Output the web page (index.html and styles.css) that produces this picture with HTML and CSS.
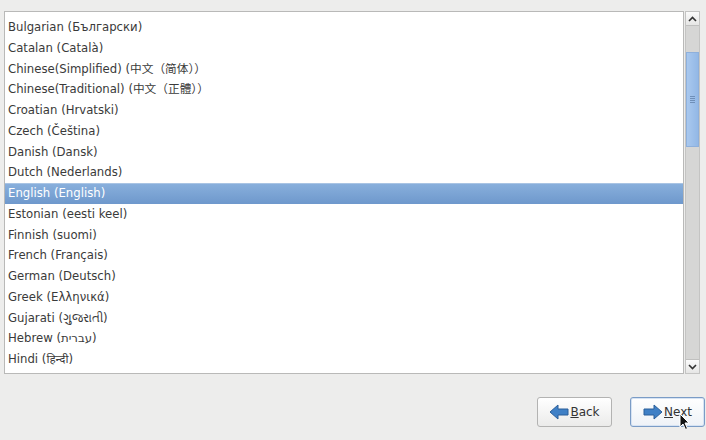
FILE: index.html
```html
<!DOCTYPE html>
<html>
<head>
<meta charset="utf-8">
<link rel="stylesheet" href="styles.css">
</head>
<body>
<div class="page">
  <div class="listwrap">
    <div class="list">
      <div class="row">Bulgarian (Български)</div>
      <div class="row">Catalan (Català)</div>
      <div class="row">Chinese(Simplified) (中文（简体））</div>
      <div class="row">Chinese(Traditional) (中文（正體））</div>
      <div class="row">Croatian (Hrvatski)</div>
      <div class="row">Czech (Čeština)</div>
      <div class="row">Danish (Dansk)</div>
      <div class="row">Dutch (Nederlands)</div>
      <div class="row sel">English (English)</div>
      <div class="row">Estonian (eesti keel)</div>
      <div class="row">Finnish (suomi)</div>
      <div class="row">French (Français)</div>
      <div class="row">German (Deutsch)</div>
      <div class="row">Greek (Ελληνικά)</div>
      <div class="row">Gujarati (ગુજરાતી)</div>
      <div class="row">Hebrew (עברית)</div>
      <div class="row">Hindi (हिन्दी)</div>
    </div>
    <div class="scrollbar">
      <div class="sbtn up"><svg width="9" height="6" viewBox="0 0 9 6"><path d="M1 5 L4.5 1.5 L8 5" fill="none" stroke="#333" stroke-width="1.6"/></svg></div>
      <div class="track">
        <div class="gap1"></div>
        <div class="thumb"><span class="grip"></span></div>
      </div>
      <div class="sbtn down"><svg width="9" height="6" viewBox="0 0 9 6"><path d="M1 1 L4.5 4.5 L8 1" fill="none" stroke="#333" stroke-width="1.6"/></svg></div>
    </div>
  </div>
  <div class="buttons">
    <button class="btn"><svg width="20" height="16" viewBox="0 0 20 16"><path d="M1 8 L9 1 L9 5 L19 5 L19 11 L9 11 L9 15 Z" fill="#3f80c6" stroke="#2a5f9a" stroke-width="1" stroke-linejoin="round"/></svg><span><u>B</u>ack</span></button>
    <button class="btn focus"><svg width="20" height="16" viewBox="0 0 20 16"><path d="M19 8 L11 1 L11 5 L1 5 L1 11 L11 11 L11 15 Z" fill="#3f80c6" stroke="#2a5f9a" stroke-width="1" stroke-linejoin="round"/></svg><span><u>N</u>ext</span>
      <svg class="cursor" width="12" height="18" viewBox="0 0 12 18"><path d="M1 1 L1 14 L4 11 L6.5 16.5 L8.5 15.5 L6 10 L10 10 Z" fill="#111" stroke="#fff" stroke-width="1"/></svg>
    </button>
  </div>
</div>
</body>
</html>
```
FILE: styles.css
```css
html, body {
  margin: 0;
  padding: 0;
}
body {
  background: #ededec;
  font-family: "DejaVu Sans", "Noto Sans", "Noto Sans CJK SC", sans-serif;
  font-size: 11.7px;
  color: #3a3a3a;
  width: 706px;
  height: 440px;
  overflow: hidden;
}
.page {
  padding: 11px 6px 0 4px;
}
.listwrap {
  display: flex;
  height: 363px;
  gap: 1px;
}
.list {
  flex: 1;
  background: #fff;
  border: 1px solid #b9b9b8;
  padding-top: 5px;
  overflow: hidden;
}
.row {
  height: 20.75px;
  line-height: 20.75px;
  padding-left: 3px;
  white-space: nowrap;
}
.row.sel {
  background: linear-gradient(#88afdc, #6e98cc);
  color: #fff;
  border-top: 1px solid #a9c4e4;
  height: 19.75px;
  line-height: 19.75px;
}
.scrollbar {
  width: 15px;
  display: flex;
  flex-direction: column;
  background: #d6d6d5;
  border: 1px solid #c4c4c3;
  box-sizing: border-box;
}
.sbtn {
  height: 13px;
  background: linear-gradient(#fbfbfb, #e6e6e5);
  display: flex;
  align-items: center;
  justify-content: center;
}
.sbtn.up { border-bottom: 1px solid #c0c0bf; }
.sbtn.down { border-top: 1px solid #c0c0bf; }
.track {
  flex: 1;
  display: flex;
  flex-direction: column;
}
.gap1 {
  height: 26px;
}
.thumb {
  height: 93px;
  background: linear-gradient(90deg, #a9c8ee, #93b8e6);
  border: 1px solid #8eb0dc;
  display: flex;
  align-items: center;
  justify-content: center;
}
.grip {
  width: 5px;
  height: 7px;
  background: repeating-linear-gradient(#6f8fb8 0 1px, transparent 1px 2px);
}
.buttons {
  display: flex;
  justify-content: flex-end;
  gap: 18px;
  margin-top: 23px;
  margin-right: -5px;
}
.btn {
  position: relative;
  width: 75px;
  height: 30px;
  border: 1px solid #b3b3b2;
  border-radius: 3px;
  background: linear-gradient(#ffffff, #ebebea);
  font-family: "DejaVu Sans", sans-serif;
  font-size: 12px;
  color: #333;
  display: flex;
  align-items: center;
  justify-content: center;
  gap: 1px;
  padding: 0;
}
.btn.focus {
  border-color: #7b9cc6;
  box-shadow: inset 0 0 0 1px #d6e3f3;
  background: linear-gradient(#ffffff, #eef2f7);
}
.btn u {
  text-decoration: underline;
}
.cursor {
  position: absolute;
  left: 48px;
  top: 15px;
}
```
